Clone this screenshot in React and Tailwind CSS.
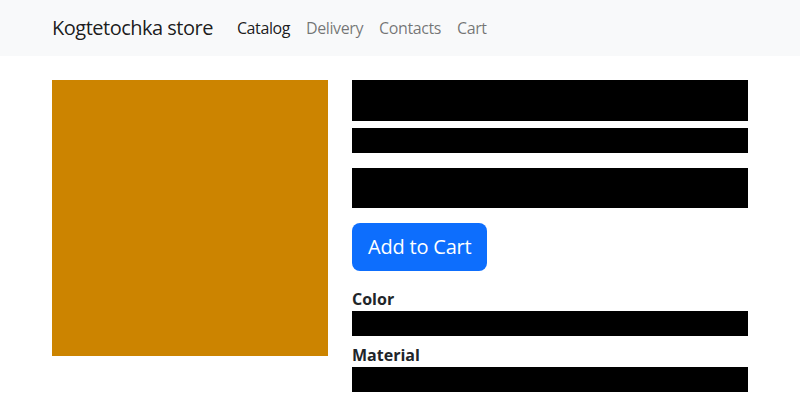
const NavLink = ({ children, active }) => (
  <a
    href="#"
    className={
      active
        ? "px-2 py-2 text-[16px] tracking-[-0.4px] text-black/90"
        : "px-2 py-2 text-[16px] tracking-[-0.4px] text-black/55"
    }
  >
    {children}
  </a>
);

const App = () => {
  return (
    <div
      className="min-h-screen bg-white text-[#212529]"
      style={{ fontFamily: '"Open Sans", "Noto Sans", sans-serif' }}
    >
      <nav className="bg-[#f8f9fa] h-14">
        <div className="mx-auto w-[696px] h-full flex items-center">
          <a href="#" className="text-[20px] tracking-[-0.5px] text-black/90 mr-4">
            Kogtetochka store
          </a>
          <div className="flex items-center">
            <NavLink active>Catalog</NavLink>
            <NavLink>Delivery</NavLink>
            <NavLink>Contacts</NavLink>
            <NavLink>Cart</NavLink>
          </div>
        </div>
      </nav>
      <main className="mx-auto w-[696px] pt-6 flex gap-6">
        <div className="w-[276px] h-[276px] bg-[#cc8400] shrink-0" />
        <div className="flex-1 flex flex-col">
          <div className="h-[41px] bg-black" />
          <div className="h-[25px] bg-black mt-[7px]" />
          <div className="h-[40px] bg-black mt-[15px]" />
          <div className="mt-[15px]">
            <button className="bg-[#0d6efd] text-white text-[20px] tracking-[-0.2px] rounded-lg px-4 h-12 leading-none">
              Add to Cart
            </button>
          </div>
          <div className="mt-4 font-bold text-[16px] leading-6">Color</div>
          <div className="h-[25px] bg-black" />
          <div className="mt-[7px] font-bold text-[16px] leading-6">Material</div>
          <div className="h-[25px] bg-black" />
        </div>
      </main>
    </div>
  );
};

export default App;
